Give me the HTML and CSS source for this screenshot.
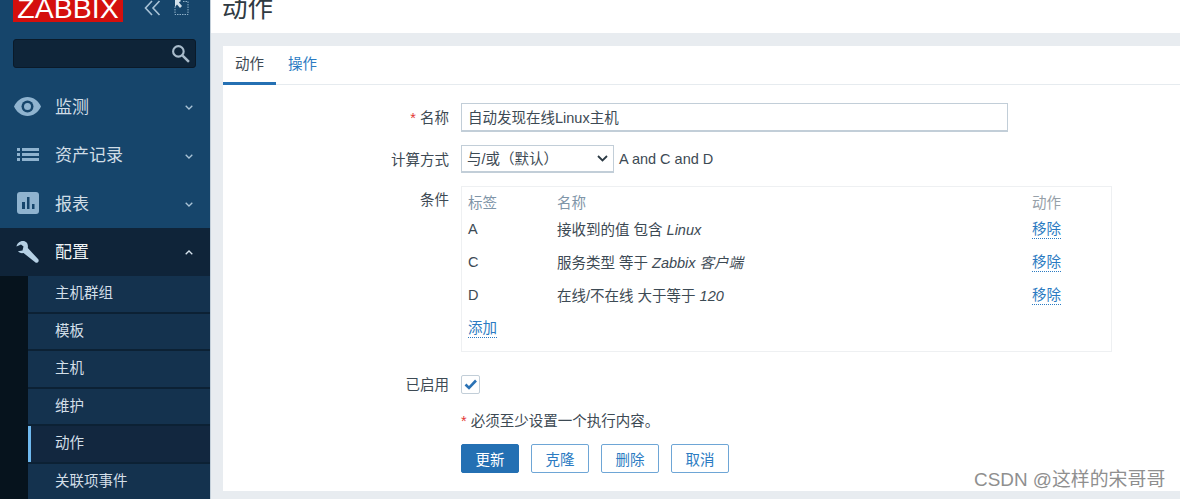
FILE: index.html
```html
<!DOCTYPE html>
<html lang="zh">
<head>
<meta charset="utf-8">
<title>动作</title>
<link rel="stylesheet" href="styles.css">
</head>
<body>
<div class="page">
  <aside class="sidebar">
    <div class="brand">
      <div class="logo">ZABBIX</div>
      <svg class="tool collapse" viewBox="0 0 17 16"><path d="M8 1 1.500 8 8 15M15.500 1 9 8l6.500 7" fill="none" stroke="#a9c3d6" stroke-width="1.600"/></svg>
      <svg class="tool expand" viewBox="0 0 15 16"><path d="M5.500 1.500h1M9 1.500h5v13H1v-8" fill="none" stroke="#8fb0c8" stroke-width="1" stroke-dasharray="1.500 1"/><path d="M1 0h6L5 2.500 8 6 6 8 3 4.500 1 7z" fill="#d4e2ec"/></svg>
    </div>
    <div class="search">
      <svg class="search-icon" viewBox="0 0 18 18"><circle cx="7" cy="7" r="5" fill="none" stroke="#a9bccb" stroke-width="2"/><path d="m11 11 6 6" stroke="#a9bccb" stroke-width="2.400"/></svg>
    </div>
    <nav>
      <a class="item">
        <span class="ico"><svg width="27" height="19" viewBox="0 0 27 19"><path d="M13.500 0C7.500 0 2.500 4 0 9.500 2.500 15 7.500 19 13.500 19S24.500 15 27 9.500C24.500 4 19.500 0 13.500 0Z" fill="#8fb3cf"/><circle cx="13.500" cy="9.500" r="6" fill="#16456b"/><circle cx="13.500" cy="9.500" r="3.500" fill="#8fb3cf"/></svg></span>
        <span class="name">监测</span>
        <svg class="chev" viewBox="0 0 8 5"><path d="m.7.7 3.300 3.300L7.300.7" fill="none" stroke="#a9c3d6" stroke-width="1.300"/></svg>
      </a>
      <a class="item">
        <span class="ico"><svg width="22" height="13" viewBox="0 0 22 13"><path d="M0 0h3v3H0zM5 0h17v3H5zM0 5h3v3H0zM5 5h17v3H5zM0 10h3v3H0zM5 10h17v3H5z" fill="#8fb3cf"/></svg></span>
        <span class="name">资产记录</span>
        <svg class="chev" viewBox="0 0 8 5"><path d="m.7.7 3.300 3.300L7.300.7" fill="none" stroke="#a9c3d6" stroke-width="1.300"/></svg>
      </a>
      <a class="item">
        <span class="ico"><svg width="22" height="22" viewBox="0 0 22 22"><rect width="22" height="22" rx="3" fill="#8fb3cf"/><path d="M5 10h3v7H5zM10 5h2.500v12H10zM15 12h2.500v5H15z" fill="#16456b"/></svg></span>
        <span class="name">报表</span>
        <svg class="chev" viewBox="0 0 8 5"><path d="m.7.7 3.300 3.300L7.300.7" fill="none" stroke="#a9c3d6" stroke-width="1.300"/></svg>
      </a>
      <a class="item open">
        <span class="ico"><svg width="23" height="22" viewBox="0 0 23 22"><path d="M7 0C3.500 0 .8 2.500.5 5.500L5 3.500l2.500 2-1 4-4.500.8C3 11.500 5 12.500 7.500 12l12 9.500c1 .7 2.500 0 3-1 .4-1 .2-2-.7-2.700L11.800 7C12.500 3 10.500 0 7 0Z" fill="#b5d0e4"/></svg></span>
        <span class="name">配置</span>
        <svg class="chev" viewBox="0 0 8 5"><path d="M.7 4.300 4 1l3.300 3.300" fill="none" stroke="#d6e4ee" stroke-width="1.300"/></svg>
      </a>
      <ul class="submenu">
        <li class="sub">主机群组</li>
        <li class="sub">模板</li>
        <li class="sub">主机</li>
        <li class="sub">维护</li>
        <li class="sub current">动作</li>
        <li class="sub">关联项事件</li>
      </ul>
    </nav>
  </aside>
  <main class="main">
    <header class="top"><h1 class="title">动作</h1></header>
    <section class="card">
      <div class="tabs">
        <span class="tab active">动作</span>
        <span class="tab">操作</span>
      </div>
      <form class="form">
        <div class="row row-name">
          <label class="label"><span class="req">*</span> 名称</label>
          <input class="text-input" value="自动发现在线Linux主机">
        </div>
        <div class="row row-calc">
          <label class="label">计算方式</label>
          <div class="calc">
            <div class="select">与/或（默认）
              <svg class="select-arrow" viewBox="0 0 11 7"><path d="m1 1 4.500 4.500L10 1" fill="none" stroke="#2c3a44" stroke-width="1.800"/></svg>
            </div>
            <span class="formula">A and C and D</span>
          </div>
        </div>
        <div class="row row-cond">
          <label class="label label-cond">条件</label>
          <div class="cond">
            <div class="cond-row cond-head"><span>标签</span><span>名称</span><span class="head-action">动作</span></div>
            <div class="cond-row"><span>A</span><span>接收到的值 包含 <em>Linux</em></span><a class="link">移除</a></div>
            <div class="cond-row"><span>C</span><span>服务类型 等于 <em>Zabbix 客户端</em></span><a class="link">移除</a></div>
            <div class="cond-row"><span>D</span><span>在线/不在线 大于等于 <em>120</em></span><a class="link">移除</a></div>
            <div class="cond-add"><a class="link">添加</a></div>
          </div>
        </div>
        <div class="row row-check">
          <label class="label">已启用</label>
          <span class="check"><svg width="13" height="11" viewBox="0 0 13 11"><path d="m1.500 5.500 3.500 3.500 7-7.500" fill="none" stroke="#2b72b5" stroke-width="2.600"/></svg></span>
        </div>
        <div class="row row-note">
          <span></span>
          <p class="note"><span class="req">*</span> 必须至少设置一个执行内容。</p>
        </div>
        <div class="row">
          <span></span>
          <div class="buttons">
            <button type="button" class="btn primary">更新</button>
            <button type="button" class="btn">克隆</button>
            <button type="button" class="btn">删除</button>
            <button type="button" class="btn">取消</button>
          </div>
        </div>
      </form>
    </section>
    <div class="band"></div>
  </main>
</div>
<div class="watermark">CSDN @这样的宋哥哥</div>
</body>
</html>
```
FILE: styles.css
```css
* { box-sizing: border-box; }
html, body { margin: 0; height: 499px; overflow: hidden; background: #fff; }
body {
  font-family: "Liberation Sans", "Noto Sans CJK SC", sans-serif;
  font-size: 14.5px;
  color: #3d4a54;
}
.page { display: flex; height: 499px; overflow: hidden; }

/* sidebar */
.sidebar {
  width: 210px;
  flex: none;
  background: #16456b;
  color: #d5e1ea;
}
.brand { display: flex; align-items: flex-start; height: 39px; padding-left: 13px; }
.logo {
  width: 110px;
  height: 22px;
  background: #d40f0d;
  color: #fff;
  font-size: 28.500px;
  line-height: 17px;
  text-align: center;
  white-space: nowrap;
}
.tool { display: block; }
.collapse { width: 17px; height: 16px; margin: 0 0 0 21px; }
.expand { width: 15px; height: 16px; margin: 0 0 0 13px; }
.search {
  margin-left: 13px;
  width: 183px;
  height: 29px;
  background: #0e2438;
  border: 1px solid #0a1a29;
  border-radius: 3px;
  position: relative;
  margin-bottom: 14px;
}
.search-icon { position: absolute; right: 5px; top: 4px; width: 19px; height: 19px; }
nav { display: block; }
.item {
  display: flex;
  align-items: center;
  height: 48.500px;
  padding-left: 14px;
  font-size: 17px;
  color: #d0dde6;
}
.ico { width: 41px; display: flex; justify-content: flex-start; }
.item:nth-child(2) .ico, .item:nth-child(3) .ico { padding-left: 3px; }
.item:nth-child(4) .ico { padding-left: 2px; }
.name { flex: 1; padding-bottom: 2px; }
.chev { width: 8px; height: 5px; margin: 3px 17px 0 0; }
.open .chev { margin-top: 1px; }
.open { background: #0f2439; color: #eef3f6; }
.submenu {
  list-style: none;
  margin: 0;
  padding: 0 0 0 28px;
  background: #06131d;
}
.sub {
  height: 37.500px;
  padding-left: 27px;
  line-height: 35px;
  background: #14324e;
  border-bottom: 2px solid #0c2134;
  color: #d3dfe8;
}
.current {
  background: #12273f;
  box-shadow: inset 3px 0 0 #6fb9ef;
}

/* main */
.main {
  flex: 1;
  display: flex;
  flex-direction: column;
  min-width: 0;
  background: #e8ecf0;
  border-left: 1px solid #c4d0da;
}
.top { height: 33px; background: #fff; flex: none; overflow: hidden; }
.title {
  margin: -10px 0 0 11px;
  font-size: 25.500px;
  font-weight: 400;
  line-height: 36px;
  color: #2f3a42;
}
.card {
  margin: 13px 0 0 12px;
  height: 445px;
  flex: none;
  background: #fff;
}
.tabs {
  display: flex;
  height: 39px;
  border-bottom: 1px solid #e6ebef;
}
.tab { width: 53px; text-align: center; line-height: 36px; color: #2b7bc2; height: 39px; }
.tab + .tab { width: 30px; margin-left: 12px; text-align: left; white-space: nowrap; }
.tab.active { color: #3d4a54; border-bottom: 3px solid #2470b3; }
.band { flex: 1; }

/* form */
.form { padding-top: 18px; }
.row {
  display: grid;
  grid-template-columns: 226px 1fr;
  column-gap: 12px;
  align-items: center;
}
.label { text-align: right; color: #3d4a54; padding-bottom: 2px; }
.req { color: #e33734; }
.row-name { margin-bottom: 13px; }
.text-input {
  width: 547px;
  height: 29px;
  border: 1px solid #c2ced8;
  border-bottom-width: 2px;
  padding: 0 6px 2px;
  font: inherit;
  color: #3d4a54;
  background: #fff;
  outline: none;
}
.row-calc { margin-bottom: 13px; }
.calc { display: flex; align-items: center; gap: 5px; }
.select {
  width: 153px;
  height: 28px;
  border: 1px solid #c2ced8;
  border-bottom-width: 2px;
  line-height: 27px;
  padding-left: 5px;
  position: relative;
  white-space: nowrap;
}
.select-arrow { position: absolute; right: 5px; top: 9px; width: 11px; height: 7px; }
.formula { white-space: nowrap; }
.row-cond { align-items: start; margin-bottom: 21px; }
.label-cond { padding-top: 2px; }
.cond {
  width: 651px;
  height: 166px;
  border: 1px solid #eef0f2;
  padding: 3px 6px 0;
}
.cond-row {
  display: grid;
  grid-template-columns: 89px 475px 1fr;
  height: 33px;
  align-items: center;
}
.cond-head {
  height: 22px;
  color: #7f95a8;
  align-items: center;
}
.head-action { color: #96a0a8; }
.cond-row em { font-style: italic; }
.link {
  color: #2b7bc2;
  border-bottom: 1px dotted #2b7bc2;
  justify-self: start;
  line-height: 17px;
}
.cond-row .link { margin-top: 2px; }
.cond-add { height: 33px; display: flex; align-items: center; padding-top: 3px; }
.row-check { margin-bottom: 15px; }
.check {
  width: 19px;
  height: 19px;
  border: 1px solid #c2ced8;
  border-radius: 2px;
  display: flex;
  align-items: center;
  justify-content: center;
}
.row-note { margin-bottom: 12px; }
.note { margin: 0; line-height: 21px; }
.buttons { display: flex; gap: 12px; }
.btn {
  width: 58px;
  height: 29px;
  padding: 0;
  background: #fff;
  border: 1px solid #6ea6d6;
  border-radius: 2px;
  color: #2b7bc2;
  font: inherit;
}
.btn.primary { background: #2470b3; border-color: #2470b3; color: #fff; }

.watermark {
  position: absolute;
  left: 974px;
  top: 467px;
  font-size: 18.900px;
  line-height: 26px;
  color: #8f8f8f;
  white-space: nowrap;
}
```
